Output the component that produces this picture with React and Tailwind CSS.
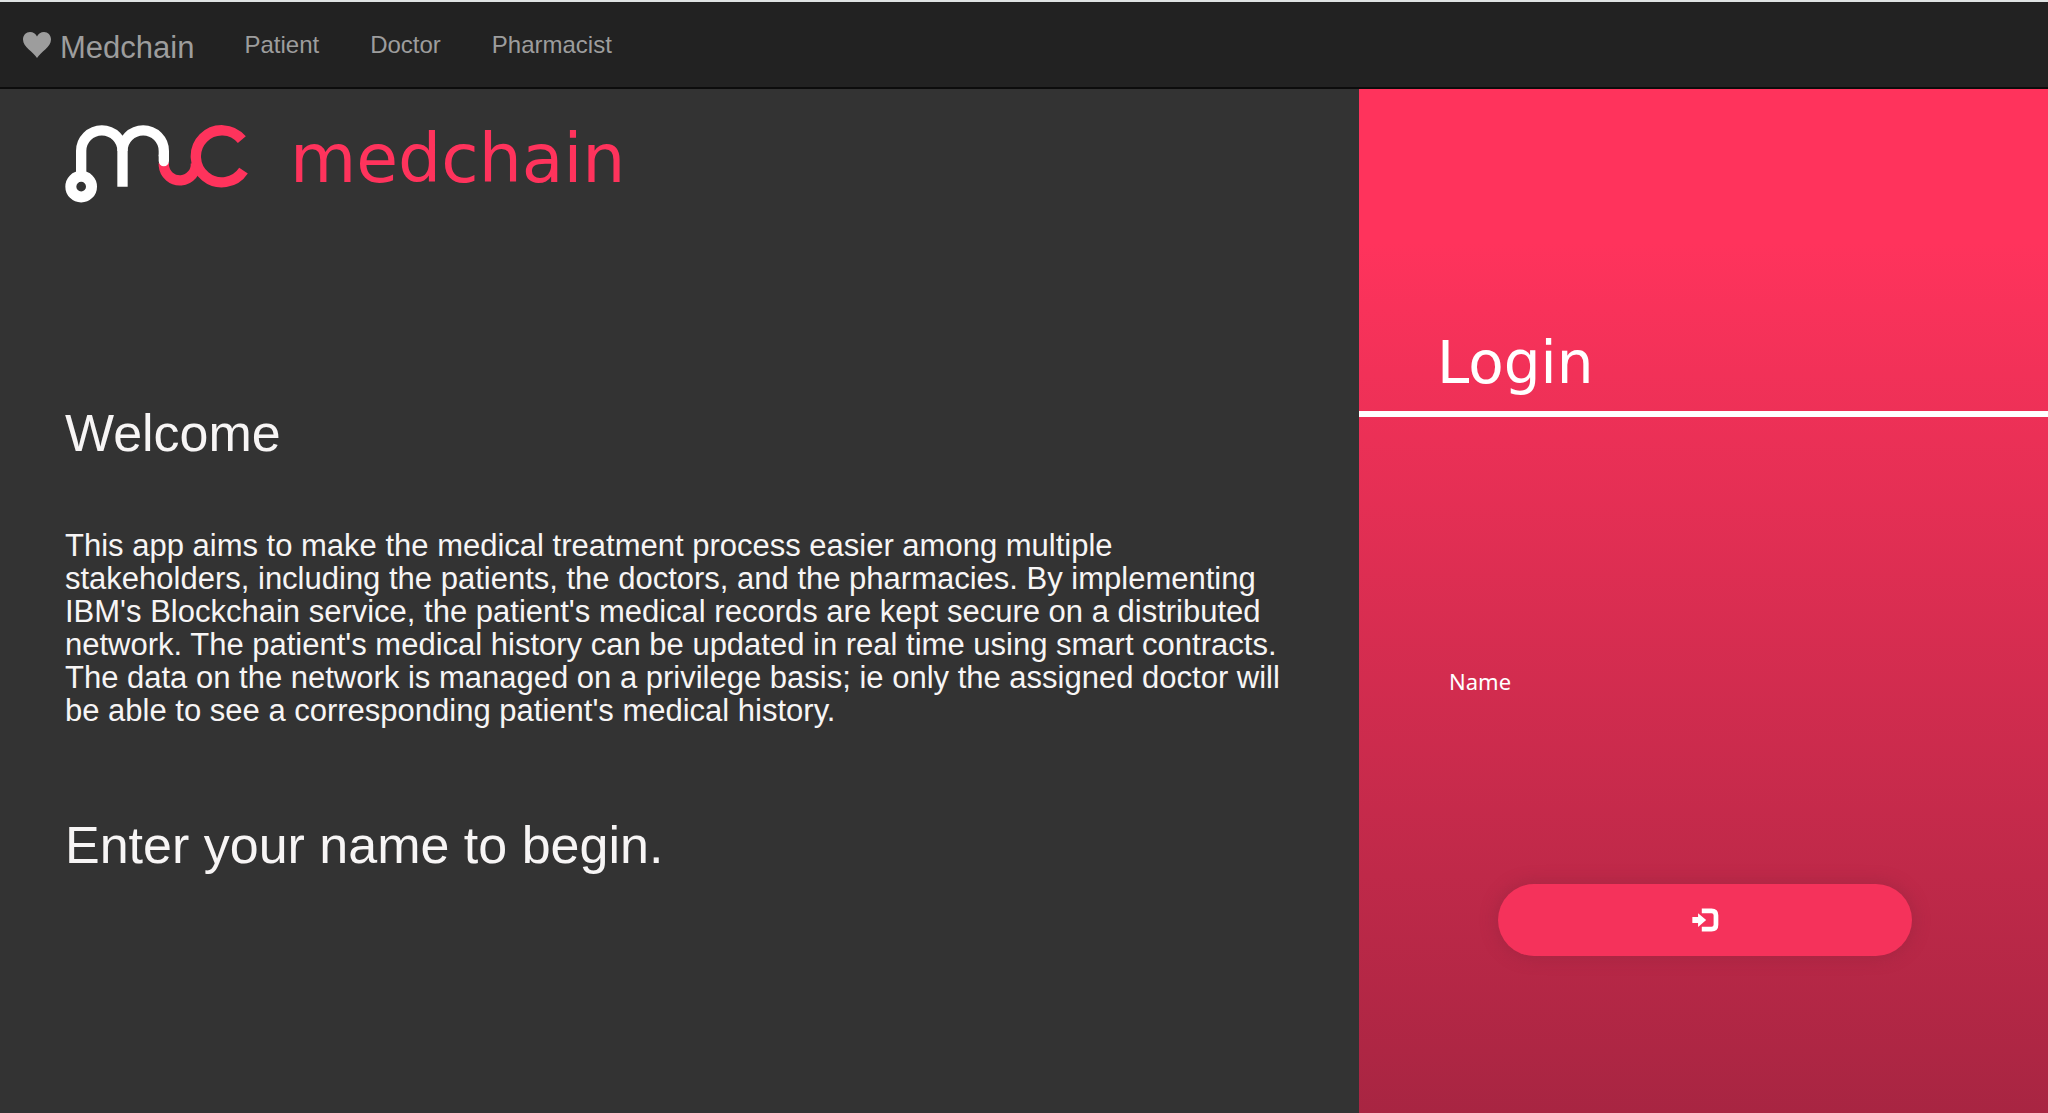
import React from "react";

const NAV_LINKS = ["Patient", "Doctor", "Pharmacist"];

function HeartIcon() {
  return (
    <svg viewBox="0 0 28 26" className="h-[26px] w-7" fill="currentColor" aria-hidden="true">
      <path d="M14 26C10 19.500 0 15 0 7.500C0 3 3.200 0 7 0C10 0 13 1.800 14 4.500C15 1.800 18 0 21 0C24.800 0 28 3 28 7.500C28 15 18 19.500 14 26Z" />
    </svg>
  );
}

function LogoMark() {
  return (
    <svg viewBox="44 46 548 234" className="h-[78px] w-[183px]" fill="none" strokeWidth="31" role="img" aria-label="mc">
      <path d="M340 160V168A48 48 0 0 0 436 160" stroke="#ff335c" />
      <path d="M574 90A78 78 0 1 0 579 183" stroke="#ff335c" />
      <path d="M92 200V124A62 62 0 0 1 216 124V231" stroke="#fff" />
      <path d="M216 124A62 62 0 0 1 340 124V140" stroke="#fff" />
      <path d="M340 138V154" stroke="#fff" strokeLinecap="round" />
      <circle cx="92" cy="231" r="31" stroke="#fff" strokeWidth="33" />
    </svg>
  );
}

function LogInIcon() {
  return (
    <svg viewBox="701 146 80 70" className="h-6 w-[27px]" aria-hidden="true">
      <path d="M702 172H719V161L743 181L719 202V190H702Z" fill="#fff" />
      <path d="M730 154H759Q772 154 772 167V195Q772 208 759 208H730" fill="none" stroke="#fff" strokeWidth="14" />
    </svg>
  );
}

export default function App() {
  return (
    <div className="flex min-h-screen flex-col bg-[#333333] font-['Liberation_Sans',Arial,sans-serif]">
      <nav className="flex h-[89px] items-start border-t-2 border-b-2 border-t-[#dfe3e3] border-b-[#0c0c0c] bg-[#222222] pl-[23px] text-[#9d9d9d]">
        <a href="#home" className="mt-[30px] flex items-start gap-[9px] text-[31px] leading-8">
          <HeartIcon />
          Medchain
        </a>
        <ul className="mt-[27px] ml-[50px] flex gap-[51px] text-2xl">
          {NAV_LINKS.map((name) => (
            <li key={name}>
              <a href={"#" + name.toLowerCase()}>{name}</a>
            </li>
          ))}
        </ul>
      </nav>
      <div className="grid flex-1 grid-cols-[1359fr_689fr]">
        <main className="px-[65px] pt-9 text-[#f7f5f5]">
          <header className="flex items-start gap-[42px]">
            <LogoMark />
            <span className="font-['DejaVu_Sans',sans-serif] text-[68px] leading-[68px] text-[#ff335c]">medchain</span>
          </header>
          <h1 className="mt-[200px] text-[52px] leading-[60px]">Welcome</h1>
          <p className="mt-[66px] text-[31px] leading-[33px]">
            This app aims to make the medical treatment process easier among multiple stakeholders, including the
            patients, the doctors, and the pharmacies. By implementing IBM's Blockchain service, the patient's medical
            records are kept secure on a distributed network. The patient's medical history can be updated in real time
            using smart contracts. The data on the network is managed on a privilege basis; ie only the assigned doctor
            will be able to see a corresponding patient's medical history.
          </p>
          <h2 className="mt-[88px] text-[52px] leading-[60px]">Enter your name to begin.</h2>
        </main>
        <aside className="bg-linear-to-b from-[#ff335c] from-15% to-[#a82542] text-white">
          <h2 className="border-b-6 border-white pt-[242px] pb-4 pl-[78px] font-['DejaVu_Sans',sans-serif] text-[58px] leading-[64px]">
            Login
          </h2>
          <form className="flex flex-col" onSubmit={(e) => e.preventDefault()}>
            <label htmlFor="name" className="mt-[248px] pl-[90px] font-['Noto_Sans',sans-serif] text-[22px] leading-8">
              Name
            </label>
            <input id="name" type="text" className="mx-[90px] h-12 bg-transparent outline-none" />
            <button
              type="submit"
              aria-label="Log in"
              className="mt-[139px] mr-[136px] ml-[139px] flex h-[72px] items-center justify-center rounded-full bg-[#f5325b] shadow-[0_0_16px_2px_rgba(140,36,60,0.4)]"
            >
              <LogInIcon />
            </button>
          </form>
        </aside>
      </div>
    </div>
  );
}
